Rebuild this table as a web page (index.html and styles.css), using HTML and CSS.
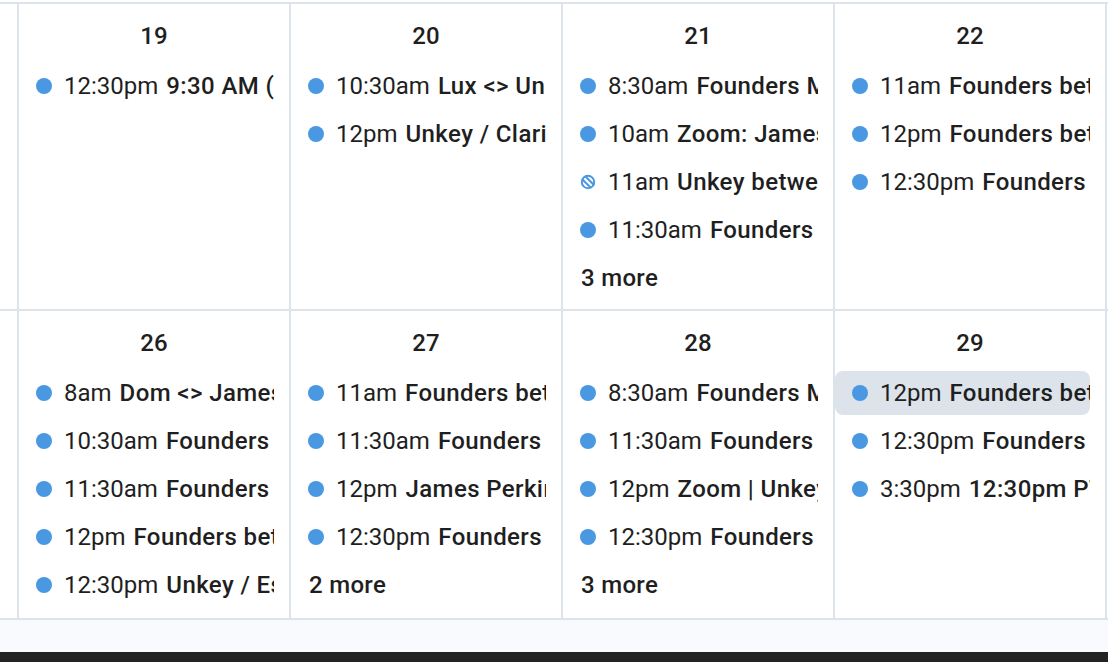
FILE: index.html
```html
<!DOCTYPE html>
<html lang="en">
<head>
<meta charset="utf-8">
<title>Calendar month</title>
<link rel="stylesheet" href="styles.css">
</head>
<body>
<div class="page">
  <div class="topgap"></div>
  <div class="month">
    <div class="cell edge"></div>
    <div class="cell">
      <div class="day">19</div>
      <div class="events">
        <div class="ev"><span class="dot"></span><span class="time">12:30pm</span><span class="title">9:30 AM (PT) Weekly sync</span></div>
      </div>
    </div>
    <div class="cell">
      <div class="day">20</div>
      <div class="events">
        <div class="ev"><span class="dot"></span><span class="time">10:30am</span><span class="title">Lux &lt;&gt; Unkey</span></div>
        <div class="ev"><span class="dot"></span><span class="time">12pm</span><span class="title">Unkey / Clarity</span></div>
      </div>
    </div>
    <div class="cell">
      <div class="day">21</div>
      <div class="events">
        <div class="ev"><span class="dot"></span><span class="time">8:30am</span><span class="title">Founders Meeting</span></div>
        <div class="ev"><span class="dot"></span><span class="time">10am</span><span class="title">Zoom: James</span></div>
        <div class="ev"><svg class="declined" width="16" height="16" viewBox="0 0 16 16" aria-hidden="true"><defs><clipPath id="dc"><circle cx="8" cy="8" r="7"/></clipPath></defs><circle cx="8" cy="8" r="6.2" fill="none" stroke="#4a98e2" stroke-width="2"/><g clip-path="url(#dc)" stroke="#4a98e2" stroke-width="2"><line x1="0" y1="3" x2="13" y2="16"/><line x1="3" y1="0" x2="16" y2="13"/></g></svg><span class="time">11am</span><span class="title">Unkey between</span></div>
        <div class="ev"><span class="dot"></span><span class="time">11:30am</span><span class="title">Founders</span></div>
        <div class="more">3 more</div>
      </div>
    </div>
    <div class="cell">
      <div class="day">22</div>
      <div class="events">
        <div class="ev"><span class="dot"></span><span class="time">11am</span><span class="title">Founders between</span></div>
        <div class="ev"><span class="dot"></span><span class="time">12pm</span><span class="title">Founders between</span></div>
        <div class="ev"><span class="dot"></span><span class="time">12:30pm</span><span class="title">Founders</span></div>
      </div>
    </div>
    <div class="cell edge"></div>

    <div class="cell edge"></div>
    <div class="cell">
      <div class="day">26</div>
      <div class="events">
        <div class="ev"><span class="dot"></span><span class="time">8am</span><span class="title">Dom &lt;&gt; James</span></div>
        <div class="ev"><span class="dot"></span><span class="time">10:30am</span><span class="title">Founders</span></div>
        <div class="ev"><span class="dot"></span><span class="time">11:30am</span><span class="title">Founders</span></div>
        <div class="ev"><span class="dot"></span><span class="time">12pm</span><span class="title">Founders between</span></div>
        <div class="ev"><span class="dot"></span><span class="time">12:30pm</span><span class="title">Unkey / Es</span></div>
      </div>
    </div>
    <div class="cell">
      <div class="day">27</div>
      <div class="events">
        <div class="ev"><span class="dot"></span><span class="time">11am</span><span class="title">Founders between</span></div>
        <div class="ev"><span class="dot"></span><span class="time">11:30am</span><span class="title">Founders</span></div>
        <div class="ev"><span class="dot"></span><span class="time">12pm</span><span class="title">James Perkins</span></div>
        <div class="ev"><span class="dot"></span><span class="time">12:30pm</span><span class="title">Founders</span></div>
        <div class="more">2 more</div>
      </div>
    </div>
    <div class="cell">
      <div class="day">28</div>
      <div class="events">
        <div class="ev"><span class="dot"></span><span class="time">8:30am</span><span class="title">Founders Meeting</span></div>
        <div class="ev"><span class="dot"></span><span class="time">11:30am</span><span class="title">Founders</span></div>
        <div class="ev"><span class="dot"></span><span class="time">12pm</span><span class="title">Zoom | Unkey</span></div>
        <div class="ev"><span class="dot"></span><span class="time">12:30pm</span><span class="title">Founders</span></div>
        <div class="more">3 more</div>
      </div>
    </div>
    <div class="cell">
      <div class="day">29</div>
      <div class="events">
        <div class="ev active"><span class="dot"></span><span class="time">12pm</span><span class="title">Founders between</span></div>
        <div class="ev"><span class="dot"></span><span class="time">12:30pm</span><span class="title">Founders</span></div>
        <div class="ev"><span class="dot"></span><span class="time">3:30pm</span><span class="title">12:30pm PT</span></div>
      </div>
    </div>
    <div class="cell edge"></div>
  </div>
  <div class="footer-space"></div>
  <div class="dark-bar"></div>
</div>
</body>
</html>
```

FILE: styles.css
```css
* { box-sizing: border-box; }

html, body {
  margin: 0;
  padding: 0;
  background: #ffffff;
}

body {
  font-family: Roboto, "Noto Sans", "Liberation Sans", sans-serif;
  color: #1f1f1f;
  overflow: hidden;
}

.page {
  width: 1108px;
  height: 662px;
  display: flex;
  flex-direction: column;
  overflow: hidden;
}

.topgap {
  height: 2px;
  background: #ffffff;
  flex: none;
}

.month {
  flex: none;
  display: grid;
  grid-template-columns: 17px repeat(4, 270px) 1fr;
  grid-template-rows: 305px 307px;
  gap: 2px;
  padding: 2px 0;
  background: #dde3ea;
}

.cell {
  background: #ffffff;
  min-width: 0;
  overflow: hidden;
}

.day {
  margin-top: 12px;
  height: 40px;
  line-height: 40px;
  text-align: center;
  font-size: 24px;
  font-weight: 500;
  color: #1f1f1f;
}

.events {
  margin-top: 8px;
  display: flex;
  flex-direction: column;
  gap: 4px;
}

.ev {
  width: 255px;
  height: 44px;
  display: flex;
  align-items: center;
  padding: 0 2px 0 17px;
  border-radius: 8px;
  white-space: nowrap;
  overflow: hidden;
  font-size: 24px;
}

.ev.active {
  background: #dde3ea;
}

.dot {
  flex: none;
  width: 16px;
  height: 16px;
  border-radius: 50%;
  background: #4a98e2;
  margin-right: 12px;
}

.declined {
  flex: none;
  margin-right: 12px;
}

.time {
  flex: none;
  font-weight: 400;
  margin-right: 8px;
}

.title {
  flex: none;
  font-weight: 500;
  letter-spacing: 0.4px;
}

.more {
  height: 44px;
  line-height: 44px;
  padding-left: 18px;
  font-size: 24px;
  font-weight: 500;
  letter-spacing: 0.3px;
  white-space: nowrap;
}

.footer-space {
  flex: none;
  height: 32px;
  background: #f8fafd;
}

.dark-bar {
  flex: none;
  height: 10px;
  background: #232323;
}
```
